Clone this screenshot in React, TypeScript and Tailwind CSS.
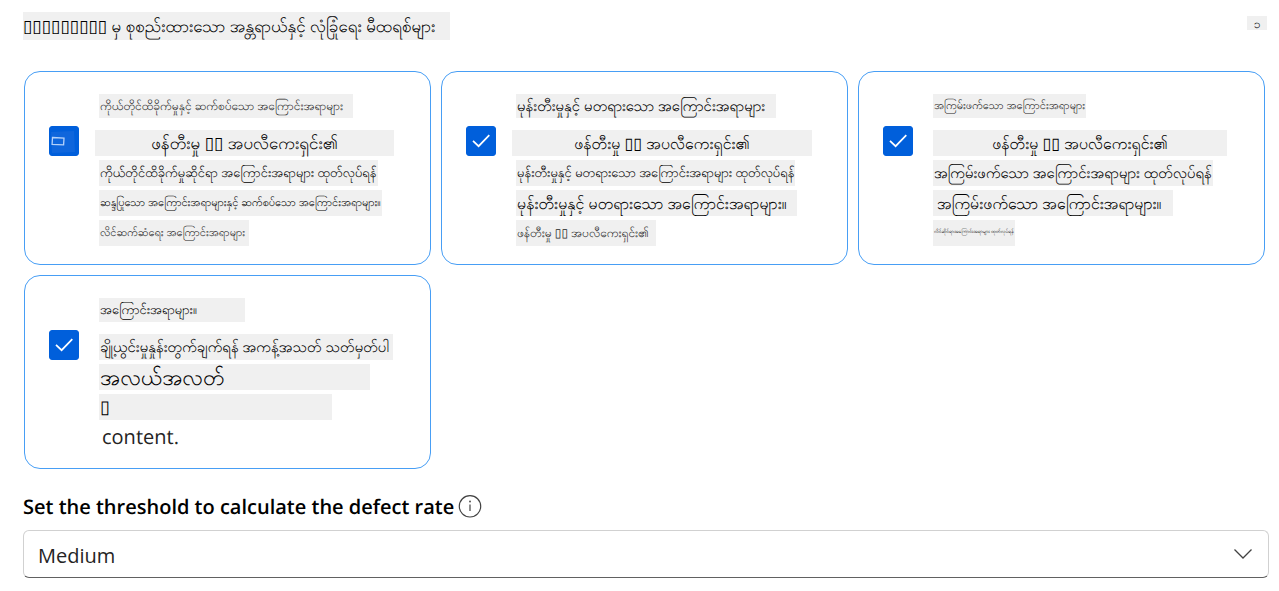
import { useState } from "react";

type Line = {
  text: string;
  strip: string;
  type: string;
};

type Category = {
  id: string;
  icon: "check" | "outline";
  lines: Line[];
};

const categories: Category[] = [
  {
    id: "self-harm",
    icon: "outline",
    lines: [
      { text: "ကိုယ်တိုင်ထိခိုက်မှုနှင့် ဆက်စပ်သော အကြောင်းအရာများ", strip: "ml-1 min-w-[254px]", type: "text-xs text-neutral-800" },
      { text: "ဖန်တီးမှု ▯▯ အပလီကေးရှင်း၏", strip: "min-w-[299px] justify-center", type: "text-[17px]" },
      { text: "ကိုယ်တိုင်ထိခိုက်မှုဆိုင်ရာ အကြောင်းအရာများ ထုတ်လုပ်ရန်", strip: "ml-1 min-w-[272px]", type: "text-[13px]" },
      { text: "ဆန္ဒပြုသော အကြောင်းအရာများနှင့် ဆက်စပ်သော အကြောင်းအရာများ။", strip: "ml-1 min-w-[274px]", type: "text-[11px]" },
      { text: "လိင်ဆက်ဆံရေး အကြောင်းအရာများ", strip: "ml-1 min-w-[150px]", type: "text-[11px] text-neutral-800" },
    ],
  },
  {
    id: "hateful",
    icon: "check",
    lines: [
      { text: "မုန်းတီးမှုနှင့် မတရားသော အကြောင်းအရာများ", strip: "ml-1 min-w-[260px]", type: "text-[15px]" },
      { text: "ဖန်တီးမှု ▯▯ အပလီကေးရှင်း၏", strip: "min-w-[300px] justify-center", type: "text-base" },
      { text: "မုန်းတီးမှုနှင့် မတရားသော အကြောင်းအရာများ ထုတ်လုပ်ရန်", strip: "ml-1 min-w-[273px]", type: "text-[13px]" },
      { text: "မုန်းတီးမှုနှင့် မတရားသော အကြောင်းအရာများ။", strip: "ml-1 min-w-[281px]", type: "text-base" },
      { text: "ဖန်တီးမှု ▯▯ အပလီကေးရှင်း၏", strip: "ml-1 min-w-[140px]", type: "text-xs text-neutral-800" },
    ],
  },
  {
    id: "violent",
    icon: "check",
    lines: [
      { text: "အကြမ်းဖက်သော အကြောင်းအရာများ", strip: "ml-1 min-w-[153px]", type: "text-[11px] text-neutral-800" },
      { text: "ဖန်တီးမှု ▯▯ အပလီကေးရှင်း၏", strip: "ml-1 min-w-[294px] justify-center", type: "text-base" },
      { text: "အကြမ်းဖက်သော အကြောင်းအရာများ ထုတ်လုပ်ရန်", strip: "ml-1 min-w-[272px]", type: "text-[15px]" },
      { text: "အကြမ်းဖက်သော အကြောင်းအရာများ။", strip: "ml-1 min-w-[240px] pl-1", type: "text-base" },
      { text: "လိင်ဆိုင်ရာအကြောင်းအရာများ ထုတ်လုပ်ရန်", strip: "ml-1 min-w-[82px]", type: "text-[5px]" },
    ],
  },
  {
    id: "sexual",
    icon: "check",
    lines: [
      { text: "အကြောင်းအရာများ။", strip: "ml-1 min-w-[146px]", type: "text-[13px]" },
      { text: "ချို့ယွင်းမှုနှုန်းတွက်ချက်ရန် အကန့်အသတ် သတ်မှတ်ပါ", strip: "ml-1 min-w-[294px]", type: "text-[15px]" },
      { text: "အလယ်အလတ်", strip: "ml-1 min-w-[271px]", type: "text-[22px]" },
      { text: "▯", strip: "ml-1 min-w-[233px]", type: "text-lg" },
      { text: "content.", strip: "ml-1.5", type: "font-['Open_Sans',sans-serif] text-xl text-[#242424]" },
    ],
  },
];

function CategoryCard({ category }: { category: Category }) {
  const [checked, setChecked] = useState(true);
  return (
    <label className="flex min-h-[194px] cursor-pointer items-start gap-4 rounded-2xl border border-[#479ef5] pt-[22px] pl-6">
      <span className="mt-8 grid size-[30px] shrink-0 place-items-center">
        <input
          type="checkbox"
          name={category.id}
          checked={checked}
          onChange={() => setChecked(!checked)}
          className="col-start-1 row-start-1 size-[30px] appearance-none rounded-[3px] border border-[#005fdb] bg-white checked:bg-[#005fdb]"
        />
        {checked && category.icon === "check" && (
          <svg viewBox="0 0 30 30" className="pointer-events-none col-start-1 row-start-1 size-[30px]" fill="none" stroke="white" strokeWidth="1.7">
            <path d="M7 14.8l5.6 5.4L23.3 9.2" />
          </svg>
        )}
        {checked && category.icon === "outline" && (
          <svg viewBox="0 0 30 30" className="pointer-events-none col-start-1 row-start-1 size-[30px]" fill="none">
            <path d="M2 6l23-1 1 21-23 1z" fill="#0f66dc" />
            <path d="M3.500 11.500l11.500.6-.4 6.800-11.500-.6z" stroke="#b5d2fa" strokeWidth="1.300" />
          </svg>
        )}
      </span>
      <span className="flex min-w-0 flex-col items-start gap-1">
        {category.lines.map((line, i) => (
          <span
            key={i}
            className={`flex items-center px-px whitespace-nowrap ${i === 0 ? "mb-2 h-6" : "h-[26px]"} ${line.text === "content." ? "" : "bg-[#f0f0f0]"} ${line.strip} ${line.type}`}
          >
            {line.text}
          </span>
        ))}
      </span>
    </label>
  );
}

export default function App() {
  return (
    <main className="bg-white pt-3 pr-2.5 pl-[23px] font-['Noto_Sans','Open_Sans',sans-serif] text-black [text-rendering:geometricPrecision]">
      <header className="flex items-start justify-between">
        <h1 className="flex h-7 min-w-[427px] items-center bg-[#f0f0f0] text-[17px] whitespace-nowrap">
          ▯▯▯▯▯▯▯▯▯ မှ စုစည်းထားသော အန္တရာယ်နှင့် လုံခြုံရေး မီထရစ်များ
        </h1>
        <span className="mt-1 mr-0.5 flex h-3.5 w-5 items-end justify-center bg-[#f0f0f0] text-xs leading-3">၁</span>
      </header>
      <section className="mt-[31px] mr-1 ml-px grid grid-cols-3 gap-2.5">
        {categories.map((category) => (
          <CategoryCard key={category.id} category={category} />
        ))}
      </section>
      <div className="mt-6 flex items-center gap-1">
        <label htmlFor="threshold" className="font-['Open_Sans',sans-serif] text-xl leading-7 font-semibold">
          Set the threshold to calculate the defect rate
        </label>
        <button type="button" aria-label="More information" className="size-6">
          <svg viewBox="0 0 24 24" className="size-6" fill="none" stroke="#424242" strokeWidth="1.2">
            <circle cx="12" cy="11.300" r="10.700" />
            <path d="M12 9.500v6.500" />
            <circle cx="12" cy="6.500" r="0.900" fill="#424242" stroke="none" />
          </svg>
        </button>
      </div>
      <div className="mt-[9px] grid items-center">
        <select
          id="threshold"
          defaultValue="Medium"
          className="col-start-1 row-start-1 h-12 w-full appearance-none rounded-md border border-[#d1d1d1] border-b-[#616161] bg-white px-3.5 pt-1 font-['Open_Sans',sans-serif] text-xl text-[#242424]"
        >
          <option>Low</option>
          <option>Medium</option>
          <option>High</option>
        </select>
        <svg viewBox="0 0 20 12" className="pointer-events-none col-start-1 row-start-1 mr-4 h-3 w-5 justify-self-end" fill="none" stroke="#424242" strokeWidth="1.300">
          <path d="M1.500 1.500L10 10l8.500-8.500" />
        </svg>
      </div>
    </main>
  );
}
